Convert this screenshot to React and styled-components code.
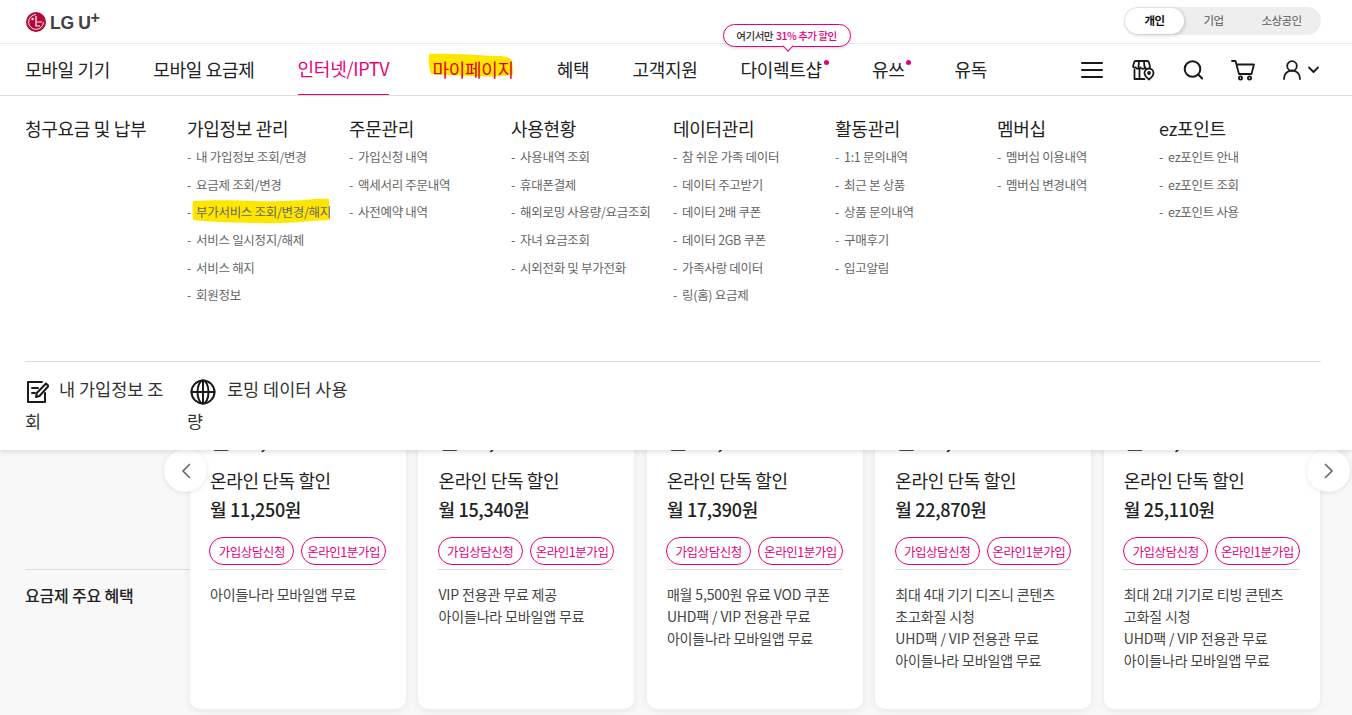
import React from 'react';
import styled, { createGlobalStyle } from 'styled-components';

const GlobalStyle = createGlobalStyle`
  html, body {
    margin: 0;
    padding: 0;
    height: 100%;
    overflow: hidden;
    background: #f8f8f8;
    font-family: "Noto Sans CJK KR", "Noto Sans", sans-serif;
    color: #222;
  }
  * { box-sizing: border-box; }
`;

const Page = styled.div`
  position: relative;
  width: 1352px;
  height: 715px;
  overflow: hidden;
`;

const Header = styled.header`
  position: relative;
  z-index: 3;
  background: #fff;
`;

const TopBar = styled.div`
  height: 44px;
  padding: 7px 31px 0 26px;
  display: flex;
  justify-content: space-between;
  border-bottom: 1px solid #ececec;
`;

const Logo = styled.div`
  display: flex;
  align-items: flex-start;
  gap: 4px;
  padding-top: 5px;
  height: 30px;
  color: #414141;
  font-family: "Liberation Sans", sans-serif;
  font-weight: 700;
  font-size: 17.5px;
  line-height: 22px;
  letter-spacing: -0.3px;
`;

const LogoPlus = styled.span`
  font-size: 16px;
  line-height: 10px;
  position: relative;
  top: -6px;
`;

const Segment = styled.div`
  width: 197px;
  height: 28px;
  border-radius: 14px;
  background: #eeeeee;
  padding: 1px;
  display: flex;
`;

const SegmentItem = styled.div`
  flex: 0 0 ${p => p.$width}px;
  height: 26px;
  padding-bottom: 2px;
  border-radius: 13px;
  display: flex;
  align-items: center;
  justify-content: center;
  font-size: 11.5px;
  letter-spacing: -0.6px;
  color: ${p => (p.$active ? '#111' : '#555')};
  font-weight: ${p => (p.$active ? 700 : 400)};
  background: ${p => (p.$active ? '#fff' : 'transparent')};
  box-shadow: ${p => (p.$active ? '1px 1px 4px rgba(0,0,0,.2)' : 'none')};
`;

const NavBar = styled.nav`
  height: 52px;
  padding: 0 31px 0 25px;
  display: flex;
  align-items: stretch;
  justify-content: space-between;
  border-bottom: 1px solid #dedede;
`;

const NavList = styled.div`
  display: flex;
  gap: 43px;
`;

const NavItem = styled.div`
  position: relative;
  height: 51px;
  display: flex;
  align-items: center;
  padding-bottom: 2px;
  margin-right: ${p => (p.$dot ? 7 : 0)}px;
  font-size: 18px;
  letter-spacing: -0.28px;
  white-space: nowrap;
  color: ${p => (p.$active ? '#e6007e' : p.$marked ? '#e0001b' : '#222')};
  border-bottom: ${p => (p.$active ? '1px solid #e6007e' : 'none')};
`;

const NavMarker = styled.svg`
  position: absolute;
  left: -4px;
  top: 9px;
  width: 85px;
  height: 25px;
`;

const MarkedText = styled.span`
  position: relative;
`;

const Dot = styled.i`
  position: absolute;
  top: 16px;
  right: -7px;
  width: 5px;
  height: 5px;
  border-radius: 50%;
  background: #e6007e;
`;

const Bubble = styled.div`
  position: absolute;
  top: -20px;
  left: -18px;
  width: 128px;
  height: 23px;
  border: 1px solid #e6007e;
  border-radius: 12px;
  background: #fff;
  box-shadow: 0 1px 3px rgba(0,0,0,.15);
  display: flex;
  align-items: center;
  justify-content: center;
  font-size: 10.5px;
  font-weight: 500;
  letter-spacing: -0.5px;
  color: #333;
  gap: 3px;
  &::after {
    content: '';
    position: absolute;
    left: 60px;
    bottom: -4px;
    width: 7px;
    height: 7px;
    background: #fff;
    border-right: 1px solid #e6007e;
    border-bottom: 1px solid #e6007e;
    transform: rotate(45deg);
  }
`;

const BubblePink = styled.span`
  color: #e6007e;
`;

const IconRow = styled.div`
  display: flex;
  align-items: center;
  gap: 28px;
`;

const MegaMenu = styled.div`
  position: absolute;
  z-index: 2;
  top: 96px;
  left: 0;
  width: 100%;
  height: 354px;
  background: #fff;
  padding: 0 31px 0 25px;
  box-shadow: 0 2px 5px rgba(0,0,0,.12);
`;

const Columns = styled.div`
  display: grid;
  grid-template-columns: repeat(8, 162px);
  height: 266px;
  padding-top: 19px;
  border-bottom: 1px solid #dcdcdc;
`;

const ColumnTitle = styled.div`
  font-size: 18px;
  line-height: 26px;
  letter-spacing: -0.3px;
  color: #222;
  margin-bottom: 2.2px;
`;

const SubItem = styled.div`
  position: relative;
  height: 27.6px;
  line-height: 27.6px;
  font-size: 12.5px;
  letter-spacing: -0.3px;
  color: #666;
  white-space: nowrap;
  &::before {
    content: '-';
    margin-right: 5px;
  }
`;

const Marker = styled.svg`
  position: absolute;
  left: 5px;
  top: 0;
  width: 138px;
  height: 26px;
`;

const SubText = styled.span`
  position: relative;
`;

const Shortcuts = styled.div`
  display: flex;
  padding-top: 11px;
`;

const Shortcut = styled.div`
  width: ${p => p.$width}px;
  margin-right: ${p => 162 - p.$width}px;
  font-size: 17.5px;
  line-height: 31px;
  color: #333;
  svg {
    vertical-align: -9px;
    margin-right: 10px;
  }
`;

const Content = styled.main`
  position: relative;
  height: 619px;
  padding: 324px 32px 0 25px;
  display: flex;
`;

const BenefitLabel = styled.div`
  flex: 0 0 165px;
  margin-top: 149px;
  height: 60px;
  border-top: 1px solid #dcdcdc;
  padding-top: 13px;
  font-size: 16px;
  font-weight: 500;
  letter-spacing: -0.2px;
  color: #222;
`;

const CardRow = styled.div`
  display: flex;
  gap: 12.45px;
`;

const Card = styled.div`
  width: 216px;
  height: 289px;
  padding: 3px 20px 0;
  background: #fff;
  border-radius: 10px;
  box-shadow: 0 2px 8px rgba(0,0,0,.07);
`;

const OldPrice = styled.div`
  height: 43px;
  font-size: 22px;
  line-height: 30px;
  font-weight: 500;
`;

const Discount = styled.div`
  font-size: 18px;
  line-height: 29px;
  letter-spacing: -0.35px;
  color: #222;
`;

const Price = styled.div`
  font-size: 18px;
  line-height: 28px;
  font-weight: 500;
  letter-spacing: -0.3px;
  color: #222;
`;

const Buttons = styled.div`
  display: flex;
  gap: 7px;
  margin: 14px 0 0 -0.6px;
  padding-bottom: 4px;
  border-bottom: 1px solid #dedede;
`;

const PinkButton = styled.div`
  width: 85px;
  height: 28px;
  border: 1px solid #e6007e;
  border-radius: 14px;
  display: flex;
  align-items: center;
  justify-content: center;
  font-size: 12.5px;
  letter-spacing: -0.45px;
  color: #e6007e;
  white-space: nowrap;
`;

const Benefits = styled.div`
  padding-top: 13px;
  font-size: 14px;
  line-height: 22px;
  letter-spacing: -0.15px;
  color: #444;
`;

const Arrow = styled.div`
  position: absolute;
  top: 353px;
  left: ${p => p.$left}px;
  width: 43px;
  height: 43px;
  border-radius: 50%;
  background: #fff;
  box-shadow: 0 1px 5px rgba(0,0,0,.1);
  display: flex;
  align-items: center;
  justify-content: center;
  z-index: 1;
`;

const nav = [
  { label: '모바일 기기' },
  { label: '모바일 요금제' },
  { label: '인터넷/IPTV', active: true },
  { label: '마이페이지', marked: true },
  { label: '혜택' },
  { label: '고객지원' },
  { label: '다이렉트샵', dot: true, bubble: true },
  { label: '유쓰', dot: true },
  { label: '유독' },
];

const menu = [
  { title: '청구요금 및 납부', items: [] },
  { title: '가입정보 관리', items: ['내 가입정보 조회/변경', '요금제 조회/변경', '부가서비스 조회/변경/해지', '서비스 일시정지/해제', '서비스 해지', '회원정보'] },
  { title: '주문관리', items: ['가입신청 내역', '액세서리 주문내역', '사전예약 내역'] },
  { title: '사용현황', items: ['사용내역 조회', '휴대폰결제', '해외로밍 사용량/요금조회', '자녀 요금조회', '시외전화 및 부가전화'] },
  { title: '데이터관리', items: ['참 쉬운 가족 데이터', '데이터 주고받기', '데이터 2배 쿠폰', '데이터 2GB 쿠폰', '가족사랑 데이터', '링(홈) 요금제'] },
  { title: '활동관리', items: ['1:1 문의내역', '최근 본 상품', '상품 문의내역', '구매후기', '입고알림'] },
  { title: '멤버십', items: ['멤버십 이용내역', '멤버십 변경내역'] },
  { title: 'ez포인트', items: ['ez포인트 안내', 'ez포인트 조회', 'ez포인트 사용'] },
];

const cards = [
  { price: '월 11,250원', old: '월 37,000원', benefits: ['아이들나라 모바일앱 무료'] },
  { price: '월 15,340원', old: '월 43,000원', benefits: ['VIP 전용관 무료 제공', '아이들나라 모바일앱 무료'] },
  { price: '월 17,390원', old: '월 47,000원', benefits: ['매월 5,500원 유료 VOD 쿠폰', 'UHD팩 / VIP 전용관 무료', '아이들나라 모바일앱 무료'] },
  { price: '월 22,870원', old: '월 55,000원', benefits: ['최대 4대 기기 디즈니 콘텐츠', '초고화질 시청', 'UHD팩 / VIP 전용관 무료', '아이들나라 모바일앱 무료'] },
  { price: '월 25,110원', old: '월 59,000원', benefits: ['최대 2대 기기로 티빙 콘텐츠', '고화질 시청', 'UHD팩 / VIP 전용관 무료', '아이들나라 모바일앱 무료'] },
];

const LogoMark = () => (
  <svg width="20" height="20" viewBox="0 0 20 20">
    <circle cx="10" cy="10" r="10" fill="#b4073a" />
    <circle cx="6.6" cy="7" r="1.2" fill="#fff" />
    <path d="M10 4v10h4" fill="none" stroke="#fff" strokeWidth="1.2" />
    <path d="M16 10h-5M10 2.6a7.4 7.4 0 1 0 7.4 7.4" fill="none" stroke="#fff" strokeWidth="0.9" />
  </svg>
);

const Stroke = ({ w = 26, h = 26, children, sw = 2 }) => (
  <svg width={w} height={h} viewBox={`0 0 ${w} ${h}`} fill="none" stroke="#1a1a1a" strokeWidth={sw} strokeLinecap="round" strokeLinejoin="round">
    {children}
  </svg>
);

const App = () => (
  <Page>
    <GlobalStyle />
    <Header>
      <TopBar>
        <Logo>
          <LogoMark />
          <span>LG U<LogoPlus>+</LogoPlus></span>
        </Logo>
        <Segment>
          <SegmentItem $active $width={59}>개인</SegmentItem>
          <SegmentItem $width={59}>기업</SegmentItem>
          <SegmentItem $width={77}>소상공인</SegmentItem>
        </Segment>
      </TopBar>
      <NavBar>
        <NavList>
          {nav.map(n => (
            <NavItem key={n.label} $active={n.active} $marked={n.marked} $dot={n.dot}>
              {n.marked && (
                <NavMarker viewBox="0 0 85 25" preserveAspectRatio="none">
                  <path d="M1 1 C20 0 45 2 68 3 C76 3 83 4 84 8 L85 21 C80 24 60 24 40 23 L3 21 Q0 12 1 1z" fill="#ffe600" />
                </NavMarker>
              )}
              <MarkedText>{n.label}</MarkedText>
              {n.dot && <Dot />}
              {n.bubble && (
                <Bubble>
                  여기서만 <BubblePink>31% 추가 할인</BubblePink>
                </Bubble>
              )}
            </NavItem>
          ))}
        </NavList>
        <IconRow>
          <Stroke w={22} h={18}>
            <path d="M1 2h20M1 9h20M1 16h20" />
          </Stroke>
          <Stroke w={24} h={22} sw={1.8}>
            <path d="M5 2h11a2 2 0 0 1 2 1.600l1 4a2.400 2.400 0 0 1-4.700.8 2.700 2.700 0 0 1-4.800 0 2.700 2.700 0 0 1-4.800 0A2.400 2.400 0 0 1 2 7.600l1-4A2 2 0 0 1 5 2zM8 2.500 7.500 8M13 2.500 13.500 8" />
            <path d="M3.500 10.500V20h10M8.500 10.500V20" />
            <path d="M18 20.500s-4.500-3.500-4.500-6.500a4.500 4.500 0 0 1 9 0c0 3-4.500 6.500-4.500 6.500z" fill="#fff" />
            <circle cx="18" cy="14" r="1" />
          </Stroke>
          <Stroke w={20} h={22}>
            <circle cx="9.500" cy="10" r="7.800" />
            <path d="M15.200 15.500l4 4" />
          </Stroke>
          <Stroke w={24} h={22} sw={1.8}>
            <path d="M1 2h3.500l3.500 13h12.500L23 5.500H5.500" />
            <circle cx="9.500" cy="19" r="1.600" />
            <circle cx="18.500" cy="19" r="1.600" />
          </Stroke>
          <Stroke w={38} h={22} sw={1.8}>
            <circle cx="9" cy="7" r="4.800" />
            <path d="M1 20c0-5 3.200-8.500 8-8.500s8 3.500 8 8.500" />
            <path d="M26 8.500l4.500 4.500 4.500-4.500" />
          </Stroke>
        </IconRow>
      </NavBar>
    </Header>
    <MegaMenu>
      <Columns>
        {menu.map(col => (
          <div key={col.title}>
            <ColumnTitle>{col.title}</ColumnTitle>
            {col.items.map(item => (
              <SubItem key={item}>
                {item.startsWith('부가서비스') && (
                  <Marker viewBox="0 0 138 26" preserveAspectRatio="none">
                    <path d="M1 3 C40 1 60 4 90 3 S125 0 137 1 L138 22 C110 23 100 26 60 25 S20 24 1 22 Q0 12 1 3z" fill="#ffe600" />
                  </Marker>
                )}
                <SubText>{item}</SubText>
              </SubItem>
            ))}
          </div>
        ))}
      </Columns>
      <Shortcuts>
        <Shortcut $width={150}>
          <Stroke w={24} h={26}>
            <path d="M20 14v9H3V3h14" />
            <path d="M7 9h6M7 14h3" />
            <path d="M11 18l.8-4L21 4.500l2.500 2.500L14.500 17z" />
          </Stroke>
          내 가입정보 조회
        </Shortcut>
        <Shortcut $width={162}>
          <Stroke w={30} h={26}>
            <circle cx="16" cy="13" r="11.500" />
            <ellipse cx="16" cy="13" rx="5.500" ry="11.500" />
            <path d="M4.500 13h23M16 1.500v23" />
          </Stroke>
          로밍 데이터 사용량
        </Shortcut>
      </Shortcuts>
    </MegaMenu>
    <Content>
      <BenefitLabel>요금제 주요 혜택</BenefitLabel>
      <Arrow $left={164}>
        <svg width="10" height="16" viewBox="0 0 10 16" fill="none" stroke="#666" strokeWidth="1.600"><path d="M9 1 2 8l7 7" /></svg>
      </Arrow>
      <CardRow>
        {cards.map(c => (
          <Card key={c.price}>
            <OldPrice>{c.old}</OldPrice>
            <Discount>온라인 단독 할인</Discount>
            <Price>{c.price}</Price>
            <Buttons>
              <PinkButton>가입상담신청</PinkButton>
              <PinkButton>온라인1분가입</PinkButton>
            </Buttons>
            <Benefits>
              {c.benefits.map(b => <div key={b}>{b}</div>)}
            </Benefits>
          </Card>
        ))}
      </CardRow>
      <Arrow $left={1307}>
        <svg width="10" height="16" viewBox="0 0 10 16" fill="none" stroke="#666" strokeWidth="1.600"><path d="m1 1 7 7-7 7" /></svg>
      </Arrow>
    </Content>
  </Page>
);

export default App;
